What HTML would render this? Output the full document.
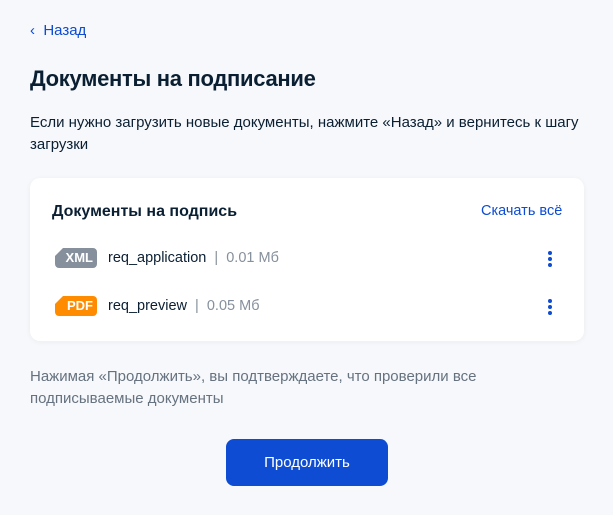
<!DOCTYPE html>
<html><head><meta charset="utf-8"><style>
*{margin:0;padding:0;box-sizing:border-box}
body{width:613px;height:515px;background:#f6f8fb;font-family:"Liberation Sans",sans-serif;color:#0b1f33;position:relative;overflow:hidden}
.a{position:absolute;white-space:nowrap}
.badge{position:absolute;width:42px;height:20px;color:#fff;font-size:13px;line-height:20px;text-align:right;padding-right:4px;clip-path:polygon(8px 0,100% 0,100% 100%,0 100%,0 8px);border-radius:4px;font-weight:bold}
.dots{position:absolute;width:4px}
.dots i{display:block;width:4px;height:4px;border-radius:50%;background:#0d4cd3;margin-bottom:2px}
</style></head><body>
<div class="a" style="left:30px;top:22px;font-size:15px;color:#0d4cd3">‹&nbsp; Назад</div>
<div class="a" style="left:30px;top:66px;font-size:22px;font-weight:bold;letter-spacing:-0.3px">Документы на подписание</div>
<div class="a" style="left:30px;top:112px;font-size:15px;line-height:22px;white-space:normal;width:575px">Если нужно загрузить новые документы, нажмите «Назад» и вернитесь к шагу загрузки</div>
<div class="a" style="left:30px;top:178px;width:554px;height:163px;background:#fff;border-radius:10px;box-shadow:0 1px 6px rgba(0,0,0,0.05)"></div>
<div class="a" style="left:52px;top:203px;font-size:16px;font-weight:bold">Документы на подпись</div>
<div class="a" style="left:481px;top:203px;font-size:14.5px;color:#0d4cd3">Скачать всё</div>
<div class="badge" style="left:55px;top:248px;background:#86909c">XML</div>
<div class="a" style="left:108px;top:250px;font-size:14.5px">req_application <span style="color:#86909c">&nbsp;|&nbsp; 0.01 Мб</span></div>
<div class="badge" style="left:55px;top:296px;background:#ff8c00">PDF</div>
<div class="a" style="left:108px;top:298px;font-size:14.5px">req_preview <span style="color:#86909c">&nbsp;|&nbsp; 0.05 Мб</span></div>
<div class="dots" style="left:548px;top:251px"><i></i><i></i><i></i></div>
<div class="dots" style="left:548px;top:299px"><i></i><i></i><i></i></div>
<div class="a" style="left:30px;top:366px;font-size:15px;line-height:22px;color:#66727f">Нажимая «Продолжить», вы подтверждаете, что проверили все<br>подписываемые документы</div>
<div class="a" style="left:226px;top:439px;width:162px;height:47px;background:#0d4cd3;border-radius:8px;color:#fff;font-size:15px;line-height:47px;text-align:center">Продолжить</div>
</body></html>
